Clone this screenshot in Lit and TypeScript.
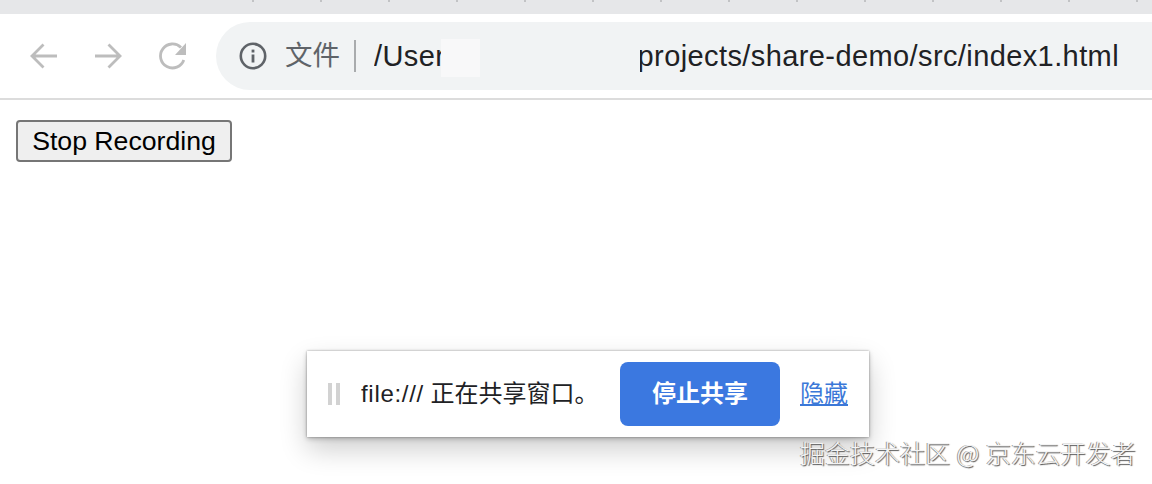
import { LitElement, html, css } from "lit";
import { customElement } from "lit/decorators.js";

@customElement("app-root")
export class AppRoot extends LitElement {
  static styles = css`
    :host { display: block; position: relative; width: 1152px; height: 484px; overflow: hidden; background: #fff; font-family: "Liberation Sans", "Noto Sans CJK SC", sans-serif; }
    .strip { height: 14px; background: #e6e7e9; padding-left: 252px; box-sizing: border-box; }
    .ticks { height: 2px; background: repeating-linear-gradient(90deg, #c2c3c5 0 2px, transparent 2px 68px); }
    .toolbar { height: 86px; box-sizing: border-box; border-bottom: 2px solid #dcdcdc; display: flex; align-items: center; padding-left: 28px; background: #fff; }
    .nav { display: flex; gap: 32px; margin-right: 28px; }
    .nav svg { display: block; width: 32px; height: 32px; fill: none; stroke: #bdbdbd; stroke-width: 2.8; }
    .omni { flex: 1; height: 68px; background: #f1f3f4; border-radius: 34px 0 0 34px; display: flex; align-items: center; padding-left: 22px; font-size: 29px; letter-spacing: 0.4px; color: #202124; }
    .info { width: 30px; height: 30px; display: block; flex: none; }
    .scheme { margin: 0 0 6px 17px; color: #5f6368; font-size: 27.5px; letter-spacing: 0; width: 55px; white-space: nowrap; flex: none; }
    .sep { width: 2px; height: 32px; background: #a9abad; margin: 0 18px 0 14px; flex: none; }
    .head { width: 67px; overflow: hidden; white-space: nowrap; flex: none; }
    .patch { width: 39px; height: 38px; margin-top: 4px; background: #f8f8f9; flex: none; }
    .gap { width: 160px; flex: none; }
    .tail { white-space: nowrap; width: 479px; overflow: hidden; flex: none; direction: rtl; }
    .tail bdi { direction: ltr; }
    .content { padding: 20px 16px; }
    .rec { display: block; width: 216px; height: 42px; box-sizing: border-box; padding: 0; background: #efefef; border: 2px solid #767676; border-radius: 4px; color: #000; font: 26.67px "Liberation Sans", sans-serif; }
    .bar { position: absolute; left: 307px; top: 351px; width: 562px; height: 86px; box-sizing: border-box; background: #fff; display: flex; align-items: center; padding-left: 21px; box-shadow: 0 0 2px rgba(0,0,0,.35), 0 12px 28px rgba(0,0,0,.2), 0 2px 5px rgba(0,0,0,.22); }
    .grip { width: 12px; height: 22px; flex: none; border-left: 4px solid #d2d2d2; border-right: 4px solid #d2d2d2; box-sizing: border-box; margin-right: 21px; }
    .msg { font-size: 24px; color: #202124; white-space: nowrap; width: 259px; flex: none; margin-bottom: 6px; }
    .url { letter-spacing: 0.7px; }
    .stop { width: 160px; height: 64px; box-sizing: border-box; border: 0; padding: 0 0 6px; border-radius: 8px; background: #3b78e0; color: #fff; font: 700 24px "Liberation Sans", "Noto Sans CJK SC", sans-serif; flex: none; }
    .hide { margin: 0 0 6px 20px; font-size: 24px; color: #3b78d8; text-decoration: underline; white-space: nowrap; }
    .mark { position: absolute; left: 800px; top: 434px; font-family: "Noto Sans CJK SC", sans-serif; font-weight: 300; font-size: 25px; line-height: 36px; word-spacing: 1px; white-space: nowrap; color: #f4f4f4; text-shadow: 1px 1px 1px #555, -1px 0 0 #999; }
  `;

  render() {
    return html`
      <div class="strip"><div class="ticks"></div></div>
      <div class="toolbar">
        <div class="nav">
          <svg viewBox="0 0 32 32"><path d="M29 16H4.5M15.5 4.5 4 16l11.500 11.500"/></svg>
          <svg viewBox="0 0 32 32"><path d="M3 16h24.500M16.500 4.500 28 16 16.500 27.500"/></svg>
          <svg viewBox="0 0 32 32"><path d="M27.800 20A12 12 0 1 1 25 7.500"/><path d="M30 3v12H19z" fill="#bdbdbd" stroke="none"/></svg>
        </div>
        <div class="omni">
          <svg class="info" viewBox="0 0 30 30"><circle cx="15" cy="15" r="12.200" fill="none" stroke="#5f6368" stroke-width="2.600"/><rect x="13.600" y="13.500" width="2.800" height="8" fill="#5f6368"/><rect x="13.600" y="8.600" width="2.800" height="2.900" fill="#5f6368"/></svg>
          <span class="scheme">文件</span>
          <span class="sep"></span>
          <span class="head">/Users</span>
          <span class="patch"></span>
          <span class="gap"></span>
          <span class="tail"><bdi>/projects/share-demo/src/index1.html</bdi></span>
        </div>
      </div>
      <div class="content"><button class="rec">Stop Recording</button></div>
      <div class="bar">
        <span class="grip"></span>
        <span class="msg"><span class="url">file:///</span> 正在共享窗口。</span>
        <button class="stop">停止共享</button>
        <a class="hide">隐藏</a>
      </div>
      <div class="mark">掘金技术社区 @ 京东云开发者</div>
    `;
  }
}
